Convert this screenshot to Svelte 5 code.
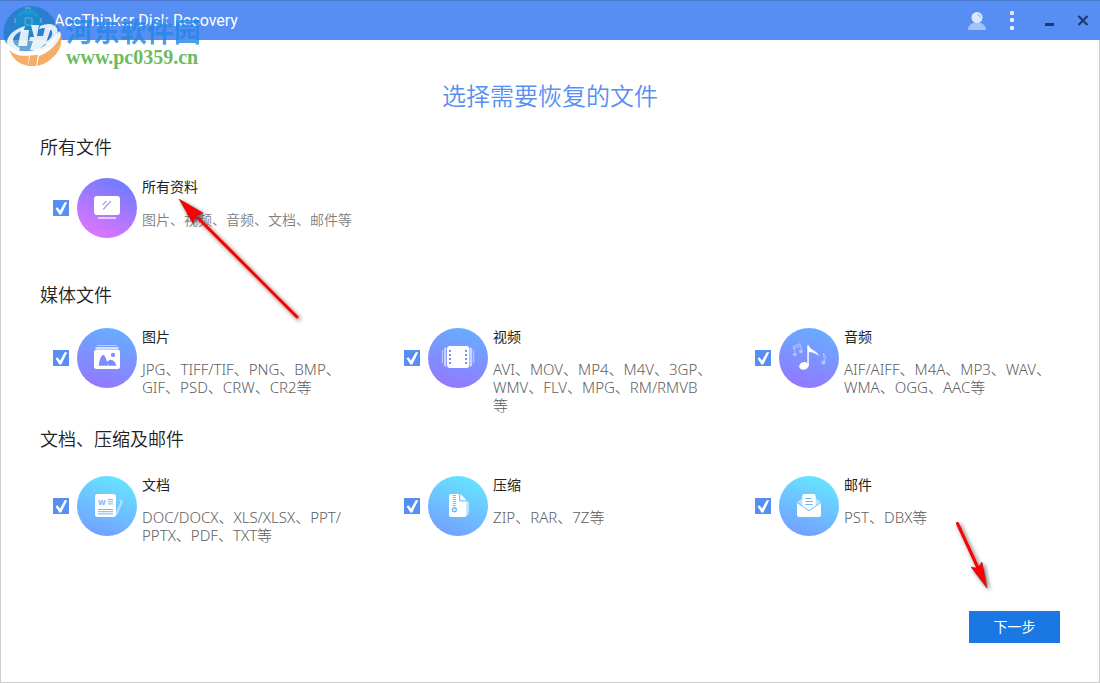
<script lang="ts">
  type Item = { id: string; name: string; types: string[]; checked: boolean };
  type Section = { id: string; title: string; tone: string; items: Item[] };

  // Each entry of `types` starts on a line of its own
  let sections = $state<Section[]>([
    {
      id: 'all',
      title: '所有文件',
      tone: 'violet',
      items: [{ id: 'everything', name: '所有资料', types: ['图片、视频、音频、文档、邮件等'], checked: true }]
    },
    {
      id: 'media',
      title: '媒体文件',
      tone: 'indigo',
      items: [
        { id: 'image', name: '图片', types: ['JPG、TIFF/TIF、PNG、BMP、', 'GIF、PSD、CRW、CR2等'], checked: true },
        { id: 'video', name: '视频', types: ['AVI、MOV、MP4、M4V、3GP、', 'WMV、FLV、MPG、RM/RMVB', '等'], checked: true },
        { id: 'audio', name: '音频', types: ['AIF/AIFF、M4A、MP3、WAV、', 'WMA、OGG、AAC等'], checked: true }
      ]
    },
    {
      id: 'docs',
      title: '文档、压缩及邮件',
      tone: 'cyan',
      items: [
        { id: 'document', name: '文档', types: ['DOC/DOCX、XLS/XLSX、PPT/', 'PPTX、PDF、TXT等'], checked: true },
        { id: 'archive', name: '压缩', types: ['ZIP、RAR、7Z等'], checked: true },
        { id: 'mail', name: '邮件', types: ['PST、DBX等'], checked: true }
      ]
    }
  ]);

  let hasSelection = $derived(sections.some((s) => s.items.some((item) => item.checked)));
</script>

{#snippet icon(id: string)}
  <svg viewBox="0 0 60 60" fill="#fff" aria-hidden="true">
    {#if id === 'everything'}
      <rect x="17" y="18" width="26" height="19" rx="3" />
      <rect x="21" y="39" width="18" height="2" opacity="0.65" />
      <path d="M25.7 27L29.3 23M26.3 31.3L34 23" stroke="#a679ff" stroke-width="1.1" fill="none" />
    {:else if id === 'image'}
      <rect x="20" y="17" width="20" height="1" opacity="0.5" />
      <rect x="18.5" y="19" width="23" height="2" opacity="0.7" />
      <rect x="17" y="21.5" width="26" height="19.5" rx="2.5" />
      <g fill="#7b8eff">
        <path d="M21.7 37.7C22.5 32 24 27 26.2 27C28.2 27 29.6 32 31 37.7Z" />
        <path d="M29.7 34.5C31 32.7 32.6 31.7 34 31.9C37 32.2 38.8 34.5 39.3 37.7H31.7Z" />
        <circle cx="36" cy="26.9" r="2.1" />
      </g>
    {:else if id === 'video'}
      <path d="M14 22h1v13h-1zM45.2 22h1v13h-1z" opacity="0.5" />
      <path d="M16 20.5L18.2 19V39L16 37.5zM42 19L44.2 20.5V37.5L42 39z" opacity="0.6" />
      <rect x="19" y="18" width="22.4" height="22" rx="3" />
      <g fill="#7b8eff">
        {#each [22, 26, 30, 34] as y}
          <rect x="21" {y} width="2" height="2" />
          <rect x="37" {y} width="2" height="2" />
        {/each}
      </g>
    {:else if id === 'audio'}
      <ellipse cx="24.9" cy="37.9" rx="4.8" ry="3.8" transform="rotate(-15 24.9 37.9)" />
      <path d="M28.3 17.2H29.7C30.5 22 38 22 40 28C39.5 27.5 35 24 29.8 24V38H28.3Z" />
      <g opacity="0.45">
        <circle cx="15.9" cy="26.6" r="1.8" />
        <circle cx="21.8" cy="23.6" r="1.8" />
        <path d="M16.8 26.5L14.2 18.5L20.8 15.8L23 23.2M14.9 20.5L21.3 17.9" fill="none" stroke="#fff" stroke-width="1" />
        <circle cx="44.4" cy="34.6" r="2" />
        <path d="M45.8 34.5L44.4 25.2C45 28 47.3 28.2 46.9 30.5" fill="none" stroke="#fff" stroke-width="1" />
      </g>
    {:else if id === 'document'}
      <path d="M42 24H44.5Q46 25 45.4 27L40.5 38.5L39 39.5V36L43.5 26.2Z" opacity="0.5" />
      <rect x="18" y="18" width="21" height="23" rx="2.5" />
      <text x="21" y="28.5" fill="#68b8ff">W</text>
      <path d="M31 23.5h5M31 25.7h5M31 27.9h5M21 33.5h15M21 35.7h15M21 37.9h15" stroke="#68b8ff" stroke-width="1" />
    {:else if id === 'archive'}
      <path d="M39 25H39.5Q41 25.5 41 27V37.5Q41 39 39 39.3Z" opacity="0.5" />
      <path d="M23 18H31V23.5Q31 25.5 33 25.5H38.7V38.7Q38.7 41 36.5 41H23Q21 41 21 39V20Q21 18 23 18Z" />
      <path d="M32.3 18L38.7 24.3H33.6Q32.3 24.3 32.3 23Z" />
      <path d="M26.4 19V31" stroke="#68b8ff" stroke-width="3" stroke-dasharray="1 1" />
      <circle cx="26.4" cy="33.7" r="1.9" fill="none" stroke="#68b8ff" stroke-width="1.4" />
    {:else}
      <path d="M18 26L24 22H36L42 26L30 34.3Z" opacity="0.5" />
      <path d="M23.3 30V20Q23.3 18 25.3 18H34.7Q36.7 18 36.7 20V30L30 34.2Z" />
      <path d="M18 26.5L30 35L42 26.5V39Q42 41 40 41H20Q18 41 18 39Z" />
      <path d="M18 26.5L30 34.8L42 26.5" fill="none" stroke="#68b8ff" stroke-width="0.8" />
      <path d="M26.3 22.5h6M26.3 25.5h7.5M26.3 28.5h7.5" stroke="#68b8ff" stroke-width="1" />
    {/if}
  </svg>
{/snippet}

<div class="window">
  <header class="titlebar">
    <svg class="app-logo" viewBox="0 0 28 28" aria-hidden="true">
      <path d="M11 0h6v4h-6zM0 11h4v5H0zM24 11h4v5h-4z" fill="#c4e9f8" />
      <circle cx="14" cy="14" r="12" fill="#1fb6f0" />
      <path d="M3 10a12 12 0 0 1 22 0q-11-6-22 0z" fill="#35d4fa" />
      <rect x="11" y="11" width="7" height="7" rx="2" fill="none" stroke="#a3e0f6" stroke-width="2" />
    </svg>
    <span class="app-name">AceThinker Disk Recovery</span>

    <div class="controls">
      <button type="button" aria-label="账户">
        <svg viewBox="0 0 20 20">
          <path d="M0 19C0 14 4 11.5 9 11.5S18 14 18 19Z" fill="#a4c2f8" />
          <circle cx="9" cy="6.5" r="5.5" fill="#dce8fd" />
          <path d="M9.5 3.5Q12 4 12.3 6.5" fill="none" stroke="#8eb2f5" stroke-width="1.2" />
        </svg>
      </button>
      <button type="button" aria-label="菜单">
        <svg viewBox="0 0 20 20" fill="#e3ecfd">
          <rect x="7" y="0" width="4" height="4" rx="1" />
          <rect x="7" y="7" width="4" height="4" rx="1" />
          <rect x="7" y="15" width="4" height="4" rx="1" />
        </svg>
      </button>
      <button type="button" aria-label="最小化">
        <svg viewBox="0 0 20 20"><rect x="7" y="12" width="9" height="3" fill="#213a69" /></svg>
      </button>
      <button type="button" aria-label="关闭">
        <svg viewBox="0 0 20 20"><path d="M5.5 5L14.5 14M14.5 5L5.5 14" stroke="#213a69" stroke-width="2.2" /></svg>
      </button>
    </div>
  </header>

  <main>
    <h1>选择需要恢复的文件</h1>

    {#each sections as section (section.id)}
      <section class={section.id}>
        <h2>{section.title}</h2>
        <div class="grid">
          {#each section.items as item (item.id)}
            <label class="item">
              <input type="checkbox" bind:checked={item.checked} />
              <span class="badge {section.tone}">{@render icon(item.id)}</span>
              <span class="text">
                <span class="name">{item.name}</span>
                <span class="types">{#each item.types as line, i}{#if i > 0}<br />{/if}{line}{/each}</span>
              </span>
            </label>
          {/each}
        </div>
      </section>
    {/each}
  </main>

  <footer>
    <button class="next" type="button" disabled={!hasSelection}>下一步</button>
  </footer>

  <!-- Site watermark -->
  <div class="watermark">
    <svg viewBox="0 0 60 60" aria-hidden="true">
      <path d="M2 36A27 27 0 0 1 53 18Q59 25 57 31Q50 43 30 46Q12 47 2 36Z" fill="#1478bd" opacity="0.65" />
      <path d="M58 27Q61 43 48 53Q43 58 34 60L36 50Q51 45 58 27Z" fill="#f5a04b" opacity="0.85" />
      <path d="M6 44Q15 52 26 49L25 60Q11 57 6 44ZM27 49L35 48L33 61H25Z" fill="#f5a04b" opacity="0.85" />
      <path d="M22 20Q4 26 4 37Q7 44 16 45L17 42Q9 38 10 33Q12 27 21 24Z" fill="#fff" opacity="0.85" />
      <path d="M18 24H26L24 40H15ZM28 19H36L34 30H40L42 22H48L43 37L35 44H27L30 35H26L27 31H31Z" fill="#fff" opacity="0.85" />
      <path d="M37 20Q49 15 54 22Q57 33 44 40L42 37Q51 31 49 25Q45 20 36 23Z" fill="#fff" opacity="0.85" />
      <path d="M5 40Q16 48 32 44Q48 39 56 25Q59 27 57 32Q50 44 38 48Q16 54 5 40Z" fill="#fff" opacity="0.9" />
    </svg>
    <div class="watermark-text">
      <strong>河东软件园</strong>
      <span>www.pc0359.cn</span>
    </div>
  </div>

  <!-- Pointer arrows -->
  <svg class="arrow arrow-type" viewBox="0 0 130 130" aria-hidden="true">
    <path d="M19 19L118 118" stroke="#f00" stroke-width="3" stroke-linecap="round" />
    <path d="M0 0L24 14L18 16.5L16.5 18L14 24Z" fill="#f00" stroke="#a00" stroke-width="0.5" />
  </svg>
  <svg class="arrow arrow-next" viewBox="0 0 40 80" aria-hidden="true">
    <path d="M1.5 1.5L22 46" stroke="#f00" stroke-width="3" stroke-linecap="round" />
    <path d="M31 66L15 45L20 46L23 44.5L26 40Z" fill="#f00" stroke="#a00" stroke-width="0.5" />
  </svg>
</div>

<style>
  :global(body) {
    margin: 0;
    background: #fff;
  }

  .window {
    position: relative;
    display: flex;
    flex-direction: column;
    box-sizing: border-box;
    min-height: 100vh;
    border: 1px solid #ccc;
    border-top: 0;
    background: #fff;
    color: #222;
    font-family: 'Noto Sans', 'Noto Sans CJK SC', sans-serif;
    font-size: 14px;
    line-height: 18px;
  }

  /* Title bar */
  .titlebar {
    display: flex;
    align-items: center;
    box-sizing: border-box;
    height: 40px;
    margin: 0 -1px;
    padding: 0 7px 0 14px;
    border-top: 1px solid #4878cd;
    background: #568ef4;
    color: #fff;
  }

  .app-logo {
    width: 28px;
    height: 28px;
    margin-right: 12px;
  }

  .app-name {
    font-family: Roboto, sans-serif;
    font-size: 16px;
  }

  .controls {
    display: flex;
    gap: 15px;
    margin-left: auto;
  }

  .controls button {
    width: 20px;
    height: 20px;
    padding: 0;
    border: 0;
    background: none;
  }

  .controls svg {
    display: block;
    width: 20px;
    height: 20px;
  }

  /* File types */
  main {
    padding: 40px 39px 0;
  }

  h1 {
    margin: 0 0 23px;
    color: #568ef4;
    font-size: 24px;
    font-weight: 350;
    line-height: 32px;
    text-align: center;
  }

  h2 {
    margin: 0 0 19px;
    font-size: 18px;
    font-weight: 350;
    line-height: 24px;
  }

  .media {
    margin-top: 18px;
  }

  .media h2 {
    margin-bottom: 21px;
  }

  .docs {
    margin-top: 12px;
  }

  .docs h2 {
    margin-bottom: 25px;
  }

  .grid {
    display: grid;
    grid-template-columns: repeat(3, minmax(0, 1fr));
    gap: 46px;
    padding-left: 13px;
  }

  .item {
    display: flex;
    align-items: flex-start;
    min-height: 87px;
  }

  input {
    flex: none;
    appearance: none;
    width: 16px;
    height: 16px;
    margin: 22px 8px 0 0;
    background: #568ef4;
  }

  input:checked::before {
    content: '';
    display: block;
    width: 16px;
    height: 16px;
    background: #fff;
    clip-path: polygon(16% 53%, 27% 46%, 44% 66%, 73% 14%, 89% 14%, 52% 90%, 40% 90%);
  }

  .badge {
    flex: none;
    width: 60px;
    height: 60px;
    margin-right: 5px;
    border-radius: 50%;
  }

  .badge svg {
    display: block;
  }

  .badge text {
    font-family: 'Liberation Sans', sans-serif;
    font-size: 8px;
    font-weight: 700;
  }

  .violet {
    background: linear-gradient(205deg, #6a7cff 8%, #e374ff 92%);
  }

  .indigo {
    background: linear-gradient(195deg, #66aeff 8%, #9378ff 92%);
  }

  .cyan {
    background: linear-gradient(200deg, #66e6ff 8%, #749cff 95%);
  }

  .text {
    display: flex;
    flex: none;
    flex-direction: column;
  }

  .types {
    margin-top: 14px;
    color: #606060;
    font-size: 15px;
    font-weight: 300;
  }

  .all .types {
    margin-top: 15px;
    color: #808080;
    font-size: 14px;
    font-weight: 350;
  }

  /* Footer */
  footer {
    display: flex;
    justify-content: flex-end;
    margin-top: auto;
    padding: 0 39px 39px;
  }

  .next {
    min-width: 91px;
    padding: 7px 24px;
    border: 0;
    background: #1a78e4;
    color: #fff;
    font: inherit;
  }

  /* Overlays */
  .watermark {
    position: absolute;
    top: 6px;
    left: 2px;
    display: flex;
    gap: 3px;
    pointer-events: none;
  }

  .watermark svg {
    width: 60px;
    height: 60px;
  }

  .watermark-text {
    display: flex;
    flex-direction: column;
    padding-top: 10px;
  }

  .watermark strong {
    color: #2487e3;
    font-family: 'Noto Sans CJK SC', sans-serif;
    font-size: 27px;
    font-weight: 700;
    line-height: 30px;
    opacity: 0.8;
  }

  .watermark span {
    color: #6dbb60;
    font-family: 'Liberation Serif', serif;
    font-size: 20px;
    font-weight: 700;
    line-height: 22px;
  }

  .arrow {
    position: absolute;
    overflow: visible;
    fill: none;
    filter: drop-shadow(2px 2px 2px rgba(0, 0, 0, 0.6));
    pointer-events: none;
  }

  .arrow-type {
    top: 199px;
    left: 178px;
    width: 130px;
    height: 130px;
  }

  .arrow-next {
    right: 103px;
    bottom: 80px;
    width: 40px;
    height: 80px;
  }
</style>
